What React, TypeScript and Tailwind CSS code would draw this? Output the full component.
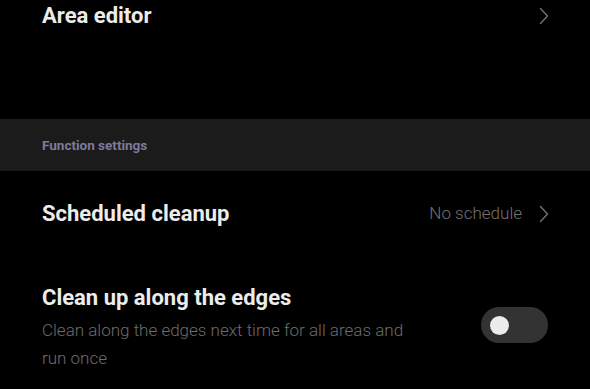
import React from "react";

function Chevron() {
  return (
    <svg width="10" height="18" viewBox="0 0 10 18" fill="none">
      <path d="M1.5 1.5 L8.5 9 L1.5 16.5" stroke="#767676" strokeWidth="1.3" strokeLinecap="round" strokeLinejoin="round" />
    </svg>
  );
}

export default function App() {
  return (
    <div className="w-[590px] h-[389px] overflow-hidden bg-black" style={{ fontFamily: "Roboto, 'Noto Sans', sans-serif" }}>
      <div className="flex items-center justify-between h-[31px] pl-[42px] pr-[41px]">
        <span className="text-[22px] font-bold text-[#ececec] leading-[28px]">Area editor</span>
        <Chevron />
      </div>
      <div className="h-[88px]" />
      <div className="h-[52px] bg-[#1b1b1b] flex items-center pl-[42px]">
        <span className="text-[13.5px] font-bold text-[#7c7c9a]">Function settings</span>
      </div>
      <div className="flex items-center justify-between h-[86px] pl-[42px] pr-[41px]">
        <span className="text-[22px] font-bold text-[#ececec] leading-[28px]">Scheduled cleanup</span>
        <div className="flex items-center gap-[17px]">
          <span className="text-[17px] font-light text-[#727272]">No schedule</span>
          <Chevron />
        </div>
      </div>
      <div className="flex items-start justify-between pl-[42px] pr-[42px] pt-[27px]">
        <div className="flex flex-col">
          <span className="text-[22px] font-bold text-[#ececec] leading-[28px]">Clean up along the edges</span>
          <span className="text-[17px] font-light text-[#6c6c6c] leading-[28px] mt-[4px] w-[378px]">
            Clean along the edges next time for all areas and run once
          </span>
        </div>
        <div className="w-[67px] h-[36px] rounded-full bg-[#333333] flex items-center pl-[9px] mt-[23px]">
          <div className="w-[19px] h-[19px] rounded-full bg-[#ececec]" />
        </div>
      </div>
    </div>
  );
}
